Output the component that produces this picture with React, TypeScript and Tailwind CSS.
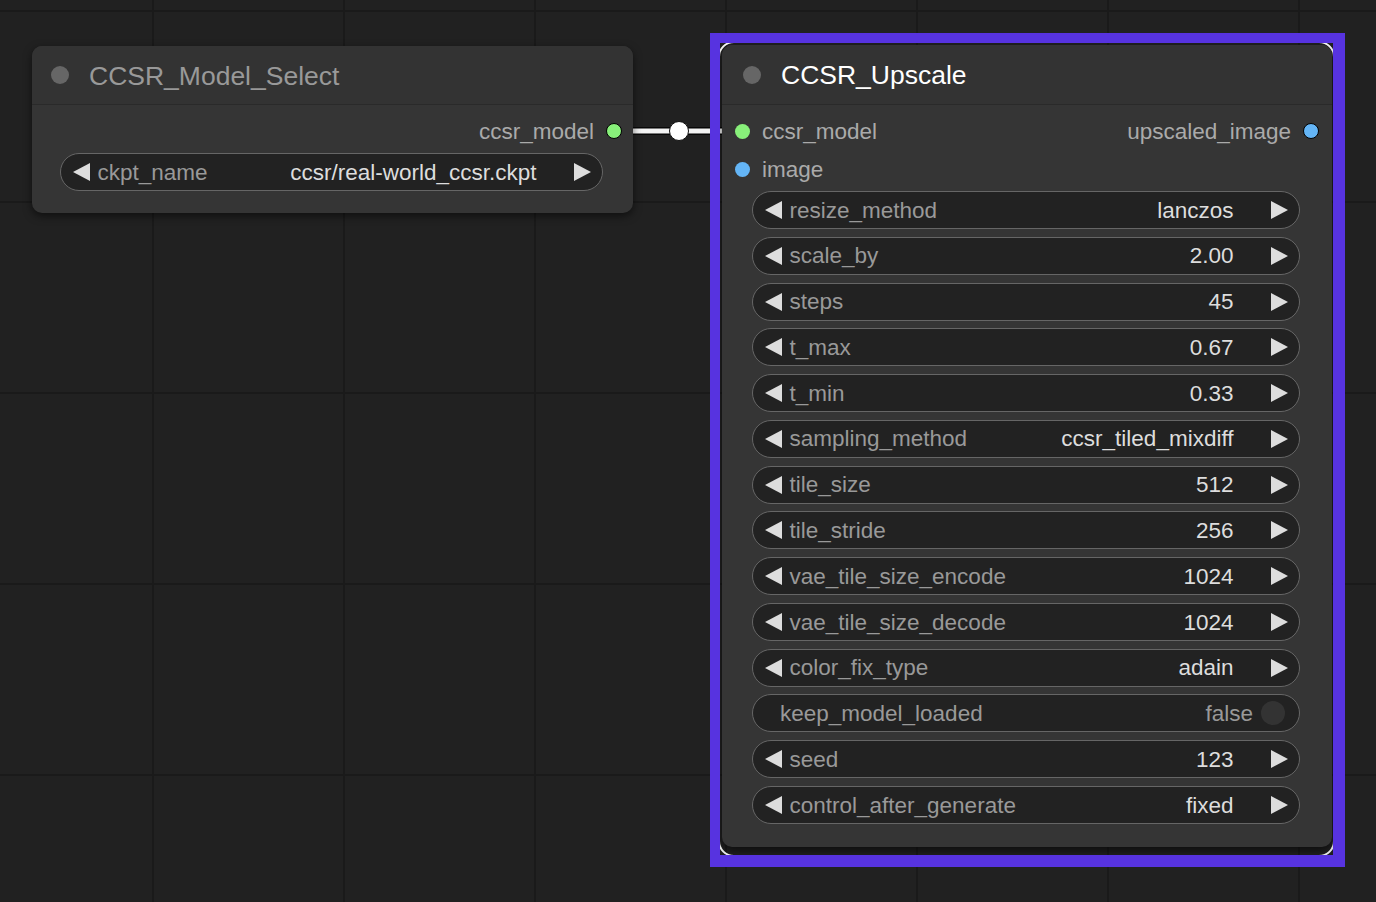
import type { ReactNode } from 'react'

type Widget =
  | { kind: 'combo'; label: string; value: string }
  | { kind: 'toggle'; label: string; value: string }

const UPSCALE_WIDGETS: Widget[] = [
  { kind: 'combo', label: 'resize_method', value: 'lanczos' },
  { kind: 'combo', label: 'scale_by', value: '2.00' },
  { kind: 'combo', label: 'steps', value: '45' },
  { kind: 'combo', label: 't_max', value: '0.67' },
  { kind: 'combo', label: 't_min', value: '0.33' },
  { kind: 'combo', label: 'sampling_method', value: 'ccsr_tiled_mixdiff' },
  { kind: 'combo', label: 'tile_size', value: '512' },
  { kind: 'combo', label: 'tile_stride', value: '256' },
  { kind: 'combo', label: 'vae_tile_size_encode', value: '1024' },
  { kind: 'combo', label: 'vae_tile_size_decode', value: '1024' },
  { kind: 'combo', label: 'color_fix_type', value: 'adain' },
  { kind: 'toggle', label: 'keep_model_loaded', value: 'false' },
  { kind: 'combo', label: 'seed', value: '123' },
  { kind: 'combo', label: 'control_after_generate', value: 'fixed' },
]

function Arrow({ dir }: { dir: 'left' | 'right' }) {
  return (
    <svg width="17" height="18" viewBox="0 0 17 18" className="shrink-0">
      {dir === 'left' ? (
        <polygon points="17,0 17,18 0,9" fill="#dddddd" />
      ) : (
        <polygon points="0,0 0,18 17,9" fill="#dddddd" />
      )}
    </svg>
  )
}

function WidgetRow({ w }: { w: Widget }) {
  if (w.kind === 'toggle') {
    return (
      <div className="flex h-[38px] items-center rounded-full border-[1.5px] border-[#666] bg-[#222] pl-[27px] pr-[14px]">
        <span className="flex-1 pt-[1px] text-[#999]">{w.label}</span>
        <span className="pt-[1px] text-[#999]">{w.value}</span>
        <span className="ml-[8px] h-[24px] w-[24px] rounded-full bg-[#333]" />
      </div>
    )
  }
  return (
    <div className="flex h-[38px] items-center rounded-full border-[1.5px] border-[#666] bg-[#222] px-[11.5px]">
      <Arrow dir="left" />
      <span className="ml-[8px] flex-1 whitespace-nowrap pt-[1px] text-[#999]">{w.label}</span>
      <span className="whitespace-nowrap pt-[1px] text-[#ddd]">{w.value}</span>
      <span className="ml-[37px]">
        <Arrow dir="right" />
      </span>
    </div>
  )
}

function Slot({ color, outlined }: { color: string; outlined?: boolean }) {
  return (
    <span
      className={`block shrink-0 rounded-full ${outlined ? 'h-[16px] w-[16px] border-[1.5px] border-black' : 'h-[15px] w-[15px]'} ${color}`}
    />
  )
}

function NodeTitle({ title, active, size }: { title: string; active?: boolean; size: string }) {
  return (
    <div className={`flex shrink-0 items-center rounded-t-[10px] border-b border-[#2a2a2a] bg-[#333] ${size}`}>
      <span className="h-[18px] w-[18px] rounded-full bg-[#666]" />
      <span className={`ml-[20px] pt-[3px] text-[26.5px] ${active ? 'text-white' : 'text-[#999]'}`}>{title}</span>
    </div>
  )
}

function Canvas({ children }: { children: ReactNode }) {
  return (
    <div className="relative h-[902px] w-full overflow-hidden bg-[#212121] bg-[linear-gradient(to_right,#1a1a1a_2px,transparent_2px),linear-gradient(to_bottom,#1a1a1a_2px,transparent_2px)] bg-[size:191px_191px] bg-[position:152px_10px] font-['Liberation_Sans',Arial,sans-serif] text-[22.5px] leading-normal">
      {children}
    </div>
  )
}

export default function App() {
  return (
    <Canvas>
      {/* link between the two nodes */}
      <svg className="absolute left-0 top-0" width="1376" height="902">
        <line x1="612" y1="131" x2="745" y2="131" stroke="#000" strokeWidth="7.5" />
        <line x1="612" y1="131" x2="745" y2="131" stroke="#f4f4f4" strokeWidth="5" />
        <circle cx="679" cy="131" r="9.5" fill="#fff" stroke="#111" strokeWidth="1" />
      </svg>

      {/* CCSR_Model_Select */}
      <div className="absolute left-[32px] top-[46px] flex h-[167px] w-[601px] flex-col rounded-[10px] bg-[#353535] shadow-[0_3px_8px_rgba(0,0,0,0.55)]">
        <NodeTitle title="CCSR_Model_Select" size="h-[59px] pl-[19px]" />
        <div className="flex flex-col pt-[12px]">
          <div className="flex h-[28px] items-center justify-end pr-[11px]">
            <span className="pt-[1px] text-[#aaa]">ccsr_model</span>
            <span className="ml-[12px]">
              <Slot color="bg-[#88f07a]" outlined />
            </span>
          </div>
          <div className="ml-[28px] mr-[30px] mt-[8px]">
            <WidgetRow w={{ kind: 'combo', label: 'ckpt_name', value: 'ccsr/real-world_ccsr.ckpt' }} />
          </div>
        </div>
      </div>

      {/* selection outline, mostly hidden under the highlight */}
      <div className="absolute left-[718px] top-[41px] h-[816px] w-[617px] rounded-[16px] border-2 border-white" />

      {/* CCSR_Upscale */}
      <div className="absolute left-[722px] top-[45px] flex h-[802px] w-[610px] flex-col rounded-[10px] bg-[#353535] shadow-[0_4px_10px_rgba(0,0,0,0.6)]">
        <NodeTitle title="CCSR_Upscale" active size="h-[60px] pl-[21px]" />
        <div className="flex flex-col pt-[12px]">
          <div className="flex h-[28px] items-center pl-[12.5px] pr-[13px]">
            <Slot color="bg-[#88f07a]" />
            <span className="ml-[12.5px] flex-1 pt-[1px] text-[#aaa]">ccsr_model</span>
            <span className="pt-[1px] text-[#aaa]">upscaled_image</span>
            <span className="ml-[12px]">
              <Slot color="bg-[#64b5f6]" outlined />
            </span>
          </div>
          <div className="mt-[10px] flex h-[28px] items-center pl-[12.5px]">
            <Slot color="bg-[#64b5f6]" />
            <span className="ml-[12.5px] pt-[1px] text-[#aaa]">image</span>
          </div>
          <div className="ml-[30px] mr-[32px] mt-[8px] flex flex-col gap-[7.77px]">
            {UPSCALE_WIDGETS.map(w => (
              <WidgetRow key={w.label} w={w} />
            ))}
          </div>
        </div>
      </div>

      {/* highlight frame */}
      <div className="absolute left-[710px] top-[33px] h-[834px] w-[635px] border-b-[12px] border-l-[10px] border-r-[12px] border-t-[10px] border-[#5733e0]" />
    </Canvas>
  )
}
